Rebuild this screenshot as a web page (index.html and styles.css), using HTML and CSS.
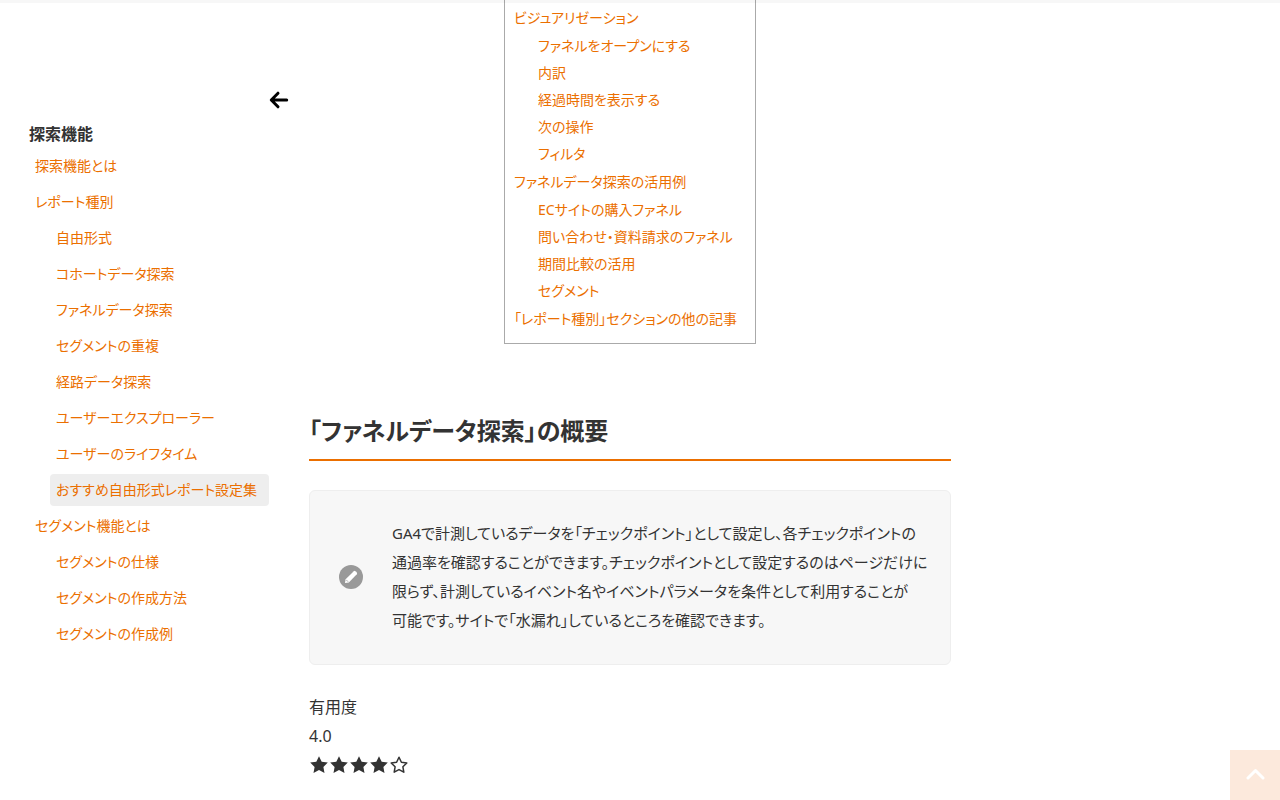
FILE: index.html
```html
<!DOCTYPE html>
<html lang="ja">
<head>
  <meta charset="UTF-8">
  <meta name="viewport" content="width=device-width, initial-scale=1.0">
  <title>ファネルデータ探索</title>
  <link rel="stylesheet" href="styles.css">
</head>
<body>

  <div class="header-edge"></div>

  <div class="page">
    <aside class="sidebar">
      <button class="sidebar-toggle" type="button" aria-label="メニューを閉じる">
        <svg width="20" height="20" viewBox="0 0 20 20" fill="none" stroke="#000" stroke-width="3" stroke-linecap="round" stroke-linejoin="round">
          <path d="M9 3.2 L2.3 10 L9 16.8 M3 10 H17.7"/>
        </svg>
      </button>
      <nav class="side-nav">
        <h3>探索機能</h3>
        <ul>
          <li><a href="#">探索機能とは</a></li>
          <li><a href="#">レポート種別</a>
            <ul>
              <li><a href="#">自由形式</a></li>
              <li><a href="#">コホートデータ探索</a></li>
              <li><a href="#">ファネルデータ探索</a></li>
              <li><a href="#">セグメントの重複</a></li>
              <li><a href="#">経路データ探索</a></li>
              <li><a href="#">ユーザーエクスプローラー</a></li>
              <li><a href="#">ユーザーのライフタイム</a></li>
              <li><a class="active" href="#">おすすめ自由形式レポート設定集</a></li>
            </ul>
          </li>
          <li><a href="#">セグメント機能とは</a>
            <ul>
              <li><a href="#">セグメントの仕様</a></li>
              <li><a href="#">セグメントの作成方法</a></li>
              <li><a href="#">セグメントの作成例</a></li>
            </ul>
          </li>
        </ul>
      </nav>
    </aside>

    <main class="content">
      <nav class="toc">
        <ul>
          <li><a href="#">ビジュアリゼーション</a>
            <ul>
              <li><a href="#">ファネルをオープンにする</a></li>
              <li><a href="#">内訳</a></li>
              <li><a href="#">経過時間を表示する</a></li>
              <li><a href="#">次の操作</a></li>
              <li><a href="#">フィルタ</a></li>
            </ul>
          </li>
          <li><a href="#">ファネルデータ探索の活用例</a>
            <ul>
              <li><a href="#">ECサイトの購入ファネル</a></li>
              <li><a href="#">問い合わせ・資料請求のファネル</a></li>
              <li><a href="#">期間比較の活用</a></li>
              <li><a href="#">セグメント</a></li>
            </ul>
          </li>
          <li><a href="#">「レポート種別」セクションの他の記事</a></li>
        </ul>
      </nav>

      <h2>「ファネルデータ探索」の概要</h2>

      <div class="note">
        <svg class="note-icon" width="24" height="24" viewBox="0 0 24 24">
          <circle cx="12" cy="12" r="12" fill="#999"/>
          <path d="M6 18 L6.6 14.2 L14.8 6.2 Q15.6 5.5 16.4 6.2 L17.8 7.6 Q18.5 8.4 17.8 9.2 L9.8 17.4 Z" fill="#fff"/>
          <path d="M7.2 14.8 L9.2 16.8" stroke="#999" stroke-width="0.8"/>
        </svg>
        <p>GA4で計測しているデータを「チェックポイント」として設定し、各チェックポイントの<br>通過率を確認することができます。チェックポイントとして設定するのはページだけに<br>限らず、計測しているイベント名やイベントパラメータを条件として利用することが<br>可能です。サイトで「水漏れ」しているところを確認できます。</p>
      </div>

      <div class="rating">
        <p>有用度</p>
        <p>4.0</p>
        <div class="stars">
          <svg viewBox="0 0 20 20"><path d="M10 1.2 L12.7 6.8 L18.8 7.6 L14.4 11.9 L15.5 18 L10 15.1 L4.5 18 L5.6 11.9 L1.2 7.6 L7.3 6.8 Z"/></svg>
          <svg viewBox="0 0 20 20"><path d="M10 1.2 L12.7 6.8 L18.8 7.6 L14.4 11.9 L15.5 18 L10 15.1 L4.5 18 L5.6 11.9 L1.2 7.6 L7.3 6.8 Z"/></svg>
          <svg viewBox="0 0 20 20"><path d="M10 1.2 L12.7 6.8 L18.8 7.6 L14.4 11.9 L15.5 18 L10 15.1 L4.5 18 L5.6 11.9 L1.2 7.6 L7.3 6.8 Z"/></svg>
          <svg viewBox="0 0 20 20"><path d="M10 1.2 L12.7 6.8 L18.8 7.6 L14.4 11.9 L15.5 18 L10 15.1 L4.5 18 L5.6 11.9 L1.2 7.6 L7.3 6.8 Z"/></svg>
          <svg class="empty" viewBox="0 0 20 20"><path d="M10 2.2 L12.4 7.2 L17.8 8 L13.9 11.8 L14.8 17.2 L10 14.6 L5.2 17.2 L6.1 11.8 L2.2 8 L7.6 7.2 Z"/></svg>
        </div>
      </div>
    </main>
  </div>

  <button class="to-top" type="button" aria-label="ページの先頭へ">
    <svg width="20" height="20" viewBox="0 0 20 20" fill="none" stroke="#fff" stroke-width="3" stroke-linecap="round" stroke-linejoin="round">
      <path d="M3 13 L10.5 5.5 L18 13"/>
    </svg>
  </button>

</body>
</html>
```
FILE: styles.css
```css
* {
  margin: 0;
  padding: 0;
  box-sizing: border-box;
}

body {
  background: #fff;
  color: #333;
  font-family: "Noto Sans", "Noto Sans CJK JP", sans-serif;
  font-size: 16px;
  line-height: 29px;
  font-feature-settings: "palt";
}

ul {
  list-style: none;
}

a {
  color: #eb6f00;
  text-decoration: none;
}

button {
  border: none;
  cursor: pointer;
}

/* bottom edge of the fixed header */
.header-edge {
  position: fixed;
  top: 0;
  left: 0;
  right: 0;
  height: 3px;
  background: rgba(0, 0, 0, 0.03);
}

.page {
  display: grid;
  grid-template-columns: 260px minmax(0, 642px) 1fr;
  column-gap: 20px;
  padding: 0 29px;
}

/* Sidebar */
.sidebar {
  display: flex;
  flex-direction: column;
  padding-top: 90px;
}

.sidebar-toggle {
  align-self: flex-end;
  width: 20px;
  height: 20px;
  background: none;
}

.side-nav {
  padding-top: 8px;
  padding-right: 20px;
  font-size: 14px;
  line-height: 32px;
}

.side-nav h3 {
  font-size: 16px;
}

.side-nav li ul {
  padding-left: 21px;
}

.side-nav a {
  display: block;
  margin-bottom: 4px;
  padding: 0 6px;
  border-radius: 4px;
  white-space: nowrap;
}

.side-nav a.active {
  background: #eee;
}

/* Table of contents */
.content {
  display: flex;
  flex-direction: column;
}

.toc {
  align-self: center;
  padding: 4px 18px 11px 9px;
  border: 1px solid #aaa;
  border-top: none;
  font-size: 14px;
  line-height: 27px;
}

.toc li ul {
  padding: 1px 0 1px 24px;
}

h2 {
  margin-top: 66px;
  padding-bottom: 8px;
  border-bottom: 2px solid #eb6f00;
  font-size: 24px;
  line-height: 41px;
}

/* Note box */
.note {
  display: flex;
  align-items: center;
  gap: 29px;
  margin-top: 29px;
  padding: 28px 16px 29px 29px;
  background: #f7f7f7;
  border: 1px solid #eee;
  border-radius: 6px;
  font-size: 15px;
}

.note-icon {
  flex: none;
}

.rating {
  margin-top: 28px;
}

.stars {
  display: flex;
  align-items: center;
  height: 27px;
}

.stars svg {
  width: 20px;
  height: 20px;
  fill: #333;
}

.stars .empty {
  fill: none;
  stroke: #333;
  stroke-width: 1.5;
  stroke-linejoin: round;
}

/* Back to top */
.to-top {
  position: fixed;
  right: 0;
  bottom: 0;
  width: 50px;
  height: 50px;
  display: flex;
  align-items: center;
  justify-content: center;
  background: #fce9dc;
}
```
